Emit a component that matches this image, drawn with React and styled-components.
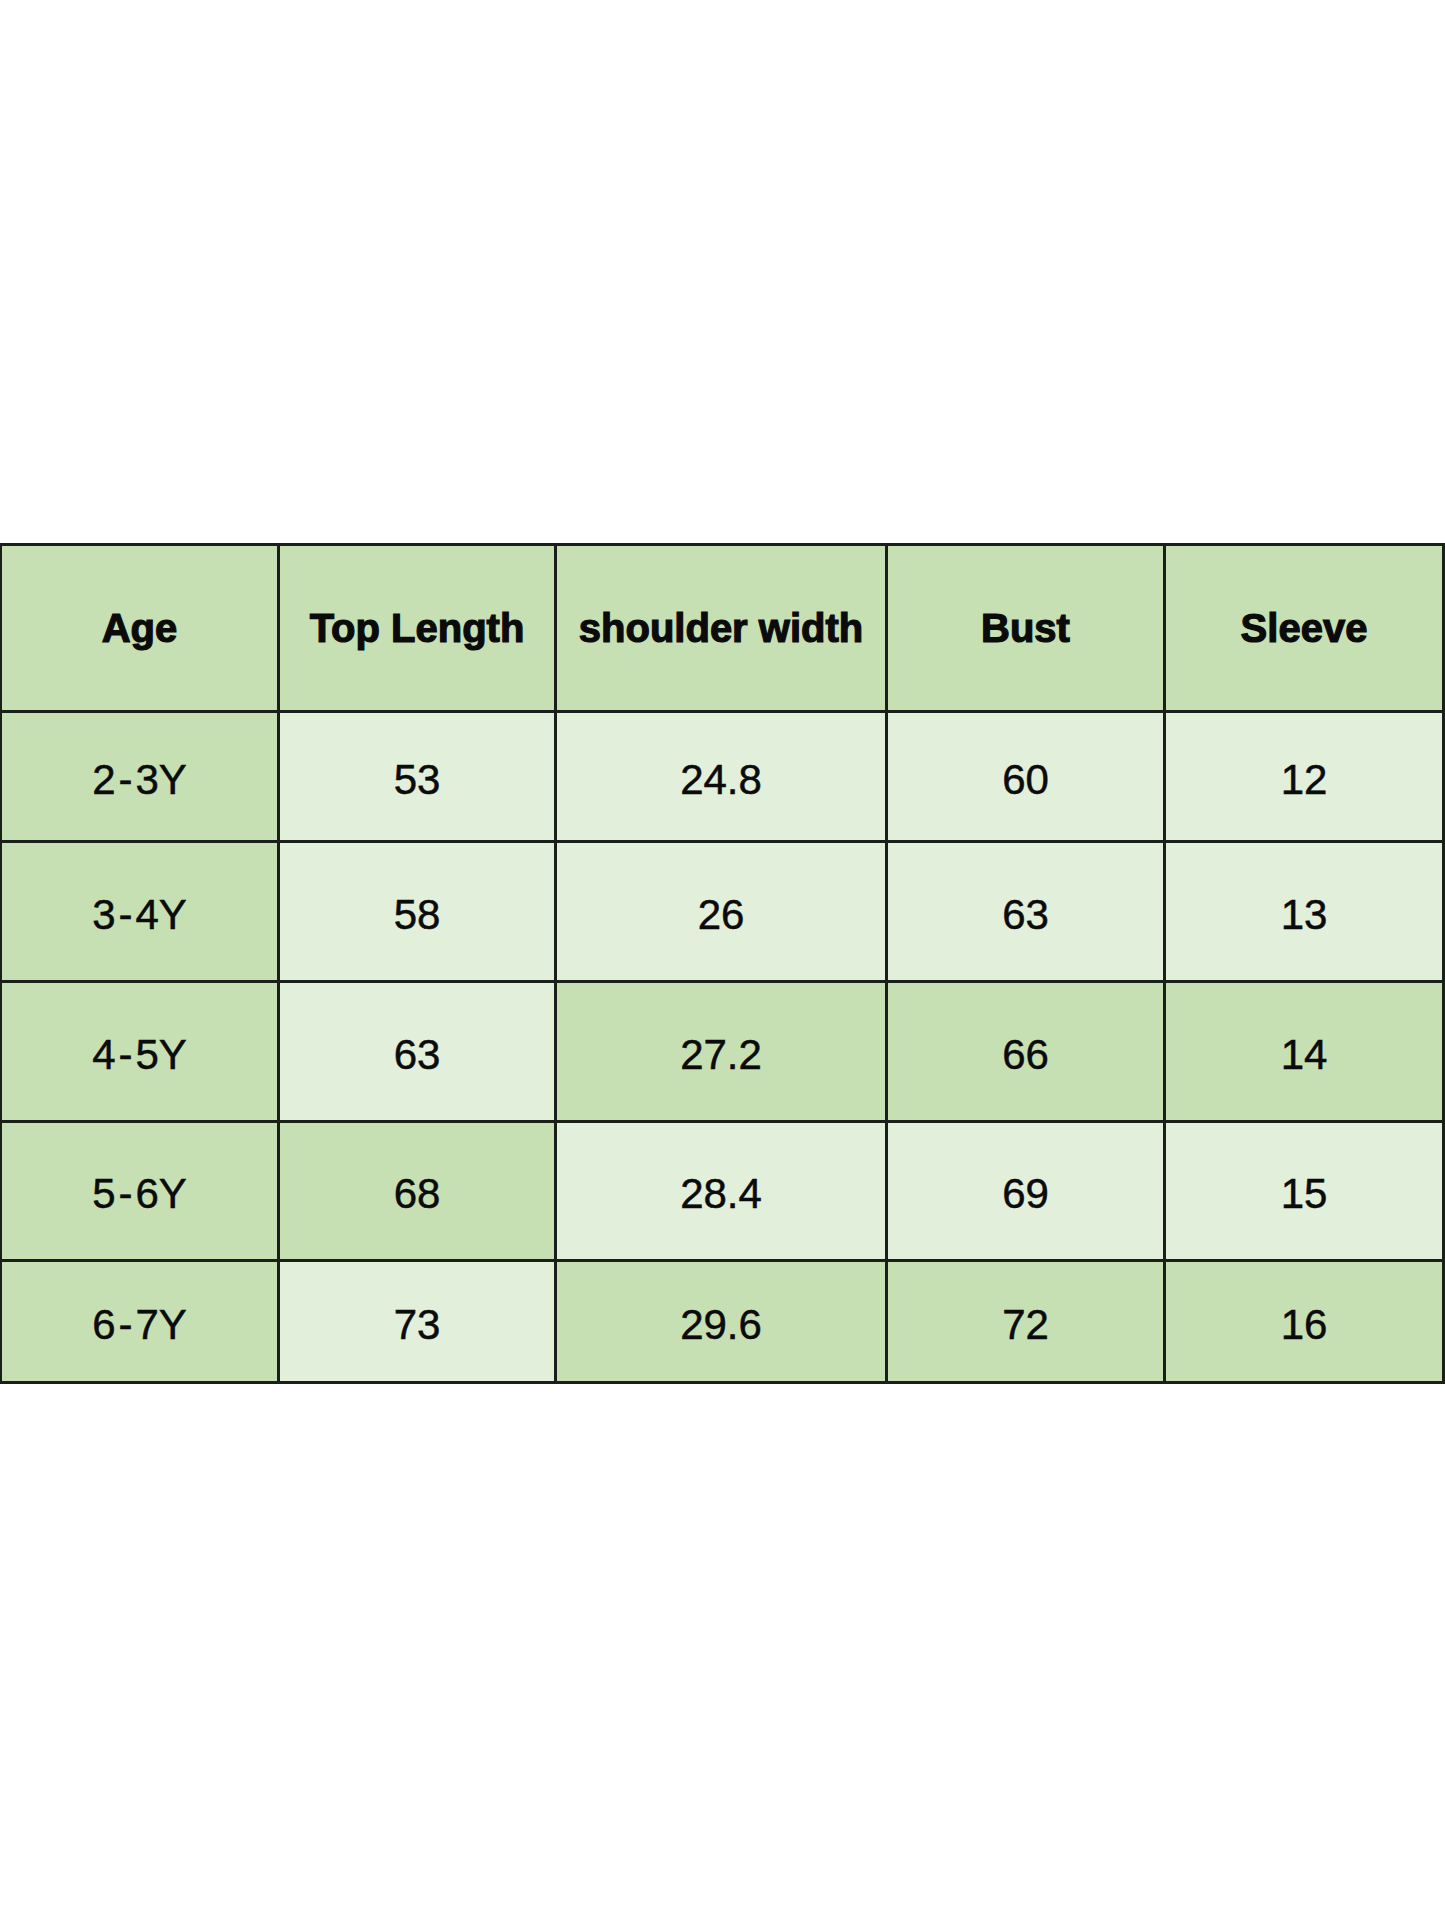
import React from "react";
import styled, { createGlobalStyle } from "styled-components";

const GlobalStyle = createGlobalStyle`
  html, body {
    margin: 0;
    padding: 0;
    background: #ffffff;
  }
`;

const headers = ["Age", "Top Length", "shoulder width", "Bust", "Sleeve"];
const colWidths = [278, 277, 331, 278, 279];

// d = dark green cell, l = light green cell
const rows = [
  { h: 130, cells: ["2-3Y", "53", "24.8", "60", "12"], tone: "dllll" },
  { h: 140, cells: ["3-4Y", "58", "26", "63", "13"], tone: "dllll" },
  { h: 140, cells: ["4-5Y", "63", "27.2", "66", "14"], tone: "dlddd" },
  { h: 139, cells: ["5-6Y", "68", "28.4", "69", "15"], tone: "ddlll" },
  { h: 122, cells: ["6-7Y", "73", "29.6", "72", "16"], tone: "dlddd" },
];

const AgeLabel = ({ text }) => {
  const [a, b] = text.split("-");
  return (
    <>
      {a}
      <Dash>-</Dash>
      {b}
    </>
  );
};

const App = () => {
  return (
    <Page>
      <GlobalStyle />
      <Table>
        <colgroup>
          {colWidths.map((w, i) => (
            <col key={i} style={{ width: w }} />
          ))}
        </colgroup>
        <thead>
          <Row $h={167}>
            {headers.map((t) => (
              <HeadCell key={t}>{t}</HeadCell>
            ))}
          </Row>
        </thead>
        <tbody>
          {rows.map((r) => (
            <Row key={r.cells[0]} $h={r.h}>
              {r.cells.map((c, i) => (
                <Cell key={i} $dark={r.tone[i] === "d"}>
                  {i === 0 ? <AgeLabel text={c} /> : c}
                </Cell>
              ))}
            </Row>
          ))}
        </tbody>
      </Table>
    </Page>
  );
};

const Page = styled.div`
  width: 1445px;
  height: 1927px;
  padding-top: 543px;
  box-sizing: border-box;
  background: #ffffff;
  overflow: hidden;
`;

const Table = styled.table`
  width: 1444px;
  table-layout: fixed;
  border-collapse: collapse;
  margin-left: -1px;
  font-family: "Liberation Sans", Arial, sans-serif;
  color: #0b0b0b;
`;

const Row = styled.tr`
  height: ${(p) => p.$h}px;
`;

const HeadCell = styled.th`
  border: 3px solid #1b1f1a;
  background: #c6e0b4;
  font-size: 40px;
  font-weight: 700;
  text-align: center;
  vertical-align: middle;
  padding: 0;
  white-space: nowrap;
  -webkit-text-stroke: 1.2px #0b0b0b;
`;

const Cell = styled.td`
  border: 3px solid #1b1f1a;
  background: ${(p) => (p.$dark ? "#c6e0b4" : "#e2efda")};
  font-size: 42px;
  font-weight: 400;
  text-align: center;
  vertical-align: middle;
  padding: 6px 0 0;
  white-space: nowrap;
  -webkit-text-stroke: 0.5px #0b0b0b;
`;

const Dash = styled.span`
  padding: 0 3px;
`;

export default App;
